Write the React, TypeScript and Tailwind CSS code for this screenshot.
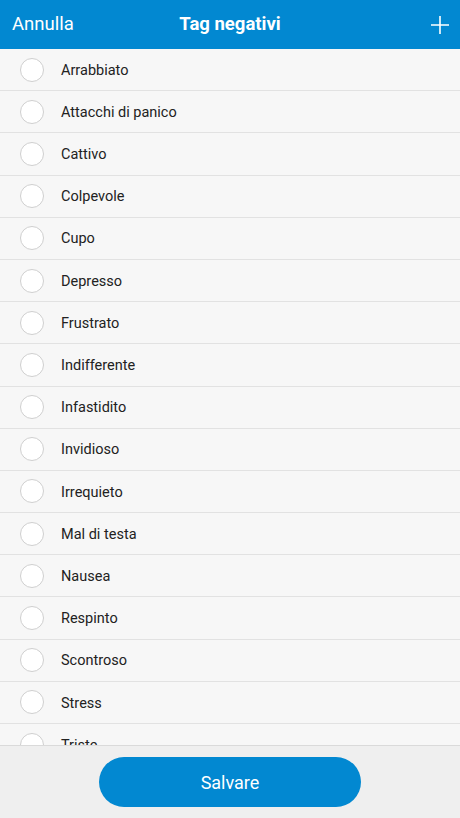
import React from "react";

const items = [
  "Arrabbiato",
  "Attacchi di panico",
  "Cattivo",
  "Colpevole",
  "Cupo",
  "Depresso",
  "Frustrato",
  "Indifferente",
  "Infastidito",
  "Invidioso",
  "Irrequieto",
  "Mal di testa",
  "Nausea",
  "Respinto",
  "Scontroso",
  "Stress",
  "Triste",
  "Vergogna",
];

export default function App() {
  return (
    <div
      className="w-[460px] h-[818px] flex flex-col bg-[#f7f7f7] overflow-hidden"
      style={{ fontFamily: "Roboto, 'Noto Sans', sans-serif" }}
    >
      <header className="h-[49px] shrink-0 bg-[#0288d1] flex items-center justify-between px-3 relative">
        <span className="text-white text-[18.5px] leading-none">Annulla</span>
        <span className="absolute left-1/2 -translate-x-1/2 text-white text-[18.5px] font-bold leading-none">
          Tag negativi
        </span>
        <svg width="20" height="20" viewBox="0 0 20 20" className="mr-[-2px]">
          <path d="M10 1v18M1 10h18" stroke="#ffffff" strokeWidth="1.6" />
        </svg>
      </header>
      <div className="flex-1 overflow-hidden">
        {items.map((t) => (
          <div
            key={t}
            className="h-[42.2px] border-b border-[#e2e2e2] flex items-center pl-[20px]"
          >
            <div className="w-[24px] h-[24px] rounded-full border border-[#cfcfcf] bg-white shrink-0" />
            <span className="ml-[17px] pt-[2px] text-[14.5px] text-[#222]">{t}</span>
          </div>
        ))}
      </div>
      <footer className="h-[73px] shrink-0 bg-[#efefef] border-t border-[#dadada] flex justify-center pt-[11px]">
        <button className="w-[262px] h-[50px] rounded-full bg-[#0288d1] text-white text-[18px]">
          Salvare
        </button>
      </footer>
    </div>
  );
}
